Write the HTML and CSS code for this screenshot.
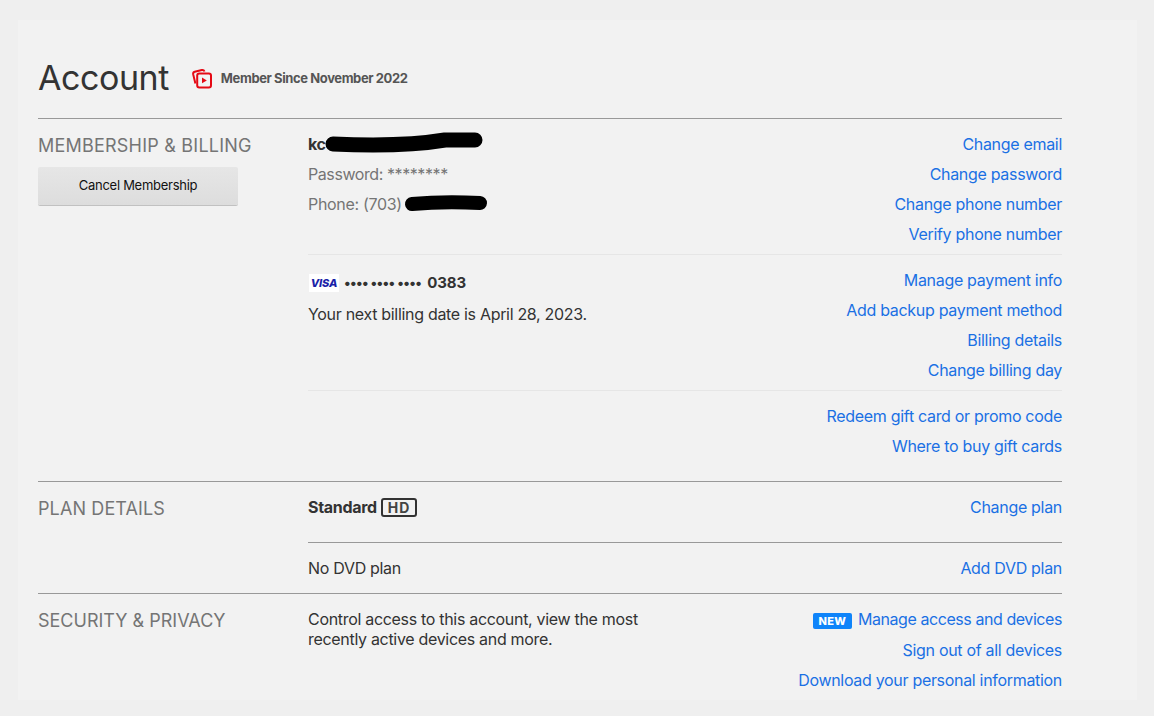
FILE: index.html
```html
<!DOCTYPE html>
<html lang="en">
<head>
<meta charset="utf-8">
<title>Account</title>
<link rel="stylesheet" href="styles.css">
</head>
<body>
<main class="panel">
  <header class="head">
    <h1 class="title">Account</h1>
    <div class="since">
      <svg class="since-icon" viewBox="0 0 24 24" width="24" height="24" fill="none" stroke="#e50914" stroke-width="2">
        <path d="M5.4 17.6 3.2 8.4Q2.8 6.300 4.700 5.800L11.800 4Q13.800 3.600 14.500 5.500"/>
        <rect x="7.200" y="7.400" width="13.800" height="14" rx="2.200"/>
        <path d="M12 11.500 16.800 14.400 12 17.300Z" fill="#e50914" stroke="none"/>
      </svg>
      <span>Member Since November 2022</span>
    </div>
  </header>

  <section class="section section-billing">
    <div class="side">
      <h2 class="side-title">MEMBERSHIP &amp; BILLING</h2>
      <button class="cancel" type="button">Cancel Membership</button>
    </div>
    <div class="body">
      <div class="block block-line">
        <div class="info">
          <div class="line strong redact-row">kc<svg class="scribble scribble-email" viewBox="0 0 160 22" width="160" height="22"><path d="M8 13 C50 15 90 14 120 9 L150 9" stroke="#000" stroke-width="15" stroke-linecap="round" fill="none"/></svg></div>
          <div class="line muted password">Password: ********</div>
          <div class="line muted redact-row">Phone: (703)<svg class="scribble scribble-phone" viewBox="0 0 84 18" width="84" height="18"><path d="M8 10 C30 8 55 8 76 9" stroke="#000" stroke-width="14" stroke-linecap="round" fill="none"/></svg></div>
        </div>
        <nav class="links">
          <a href="#">Change email</a>
          <a href="#">Change password</a>
          <a href="#">Change phone number</a>
          <a href="#">Verify phone number</a>
        </nav>
      </div>
      <div class="block block-line">
        <div class="info">
          <div class="line strong card">
            <span class="visa">VISA</span>
            <span class="dots">•••• •••• ••••</span>
            <span>0383</span>
          </div>
          <div class="line dark billing-date">Your next billing date is April 28, 2023.</div>
        </div>
        <nav class="links">
          <a href="#">Manage payment info</a>
          <a href="#">Add backup payment method</a>
          <a href="#">Billing details</a>
          <a href="#">Change billing day</a>
        </nav>
      </div>
      <div class="block">
        <div class="info"></div>
        <nav class="links">
          <a href="#">Redeem gift card or promo code</a>
          <a href="#">Where to buy gift cards</a>
        </nav>
      </div>
    </div>
  </section>

  <section class="section section-plan">
    <div class="side">
      <h2 class="side-title">PLAN DETAILS</h2>
    </div>
    <div class="body">
      <div class="block block-plan">
        <div class="info">
          <div class="line strong plan">Standard <span class="hd">HD</span></div>
        </div>
        <nav class="links"><a href="#">Change plan</a></nav>
      </div>
      <div class="block">
        <div class="info"><div class="line dark">No DVD plan</div></div>
        <nav class="links"><a href="#">Add DVD plan</a></nav>
      </div>
    </div>
  </section>

  <section class="section section-security">
    <div class="side">
      <h2 class="side-title">SECURITY &amp; PRIVACY</h2>
    </div>
    <div class="body">
      <div class="block">
        <div class="info"><p class="desc">Control access to this account, view the most recently active devices and more.</p></div>
        <nav class="links">
          <a class="link-new" href="#"><span class="new">NEW</span>Manage access and devices</a>
          <a href="#">Sign out of all devices</a>
          <a href="#">Download your personal information</a>
        </nav>
      </div>
    </div>
  </section>
</main>
</body>
</html>
```
FILE: styles.css
```css
* { box-sizing: border-box; }
html, body { margin: 0; height: 716px; overflow: hidden; }
body {
  background: #efefef;
  color: #333;
  font-family: Inter, "Liberation Sans", sans-serif;
  font-size: 16px;
  letter-spacing: -.31px;
}
.panel {
  width: 1119px;
  height: 680px;
  margin: 20px 0 0 18px;
  padding: 0 75px 0 20px;
  background: #f2f2f2;
}
.head {
  display: flex;
  align-items: center;
  height: 98px;
  padding-top: 18px;
}
.title {
  margin: 0;
  font-size: 34px;
  font-weight: 400;
  line-height: 40px;
  letter-spacing: -.45px;
  color: #333;
}
.since {
  display: flex;
  align-items: center;
  gap: 7px;
  margin-left: 21px;
  font-size: 13px;
  font-weight: 700;
  letter-spacing: -.4px;
  color: #555;
}
.section {
  display: flex;
  border-top: 1px solid #999;
}
.section-billing { height: 363px; padding-top: 10px; }
.section-plan { height: 112px; padding-top: 10px; }
.section-security { padding-top: 10px; }
.side { width: 270px; flex: none; }
.side-title {
  margin: 0;
  padding-top: 1px;
  font-size: 18px;
  font-weight: 400;
  line-height: 32px;
  letter-spacing: .12px;
  color: #757575;
}
.section-billing .side-title { letter-spacing: .22px; }
.section-security .side-title { letter-spacing: 0; }
.cancel {
  display: block;
  width: 200px;
  height: 38px;
  margin-top: 5px;
  padding-bottom: 4px;
  border: 0;
  border-radius: 2px;
  background: linear-gradient(#e6e6e6, #dddddd);
  box-shadow: 0 1px 0 rgba(0, 0, 0, .2);
  font: 13px Inter, "Liberation Sans", sans-serif;
  letter-spacing: -.27px;
  color: #111;
}
.body { flex: 1; }
.block { display: flex; justify-content: space-between; }
.block-line { border-bottom: 1px solid #e6e6e6; padding-bottom: 5px; margin-bottom: 10px; }
.block-plan { border-bottom: 1px solid #999; padding-bottom: 20px; margin-bottom: 10px; }
.info { width: 340px; }
.line { height: 30px; line-height: 30px; white-space: nowrap; }
.strong { font-weight: 700; color: #333; }
.muted { color: #757575; }
.password { letter-spacing: -.42px; }
.dark { color: #333; }
.redact-row { display: flex; align-items: center; }
.scribble-email { margin: -4px 0 0 -1px; }
.scribble-phone { margin: -2px 0 0 2px; }
.card { display: flex; align-items: center; gap: 6px; font-size: 15px; padding-top: 5px; letter-spacing: -.1px; }
.visa {
  width: 30px;
  height: 18px;
  background: #fff;
  color: #1a1fa8;
  font-size: 11px;
  font-weight: 800;
  font-style: italic;
  line-height: 18px;
  text-align: center;
  margin-left: 1px;
}
.dots { font-size: 14px; font-weight: 700; letter-spacing: -.65px; margin-left: -1px; }
.billing-date { margin-top: 4px; }
.plan { display: flex; align-items: center; gap: 4px; }
.hd {
  height: 19px;
  padding: 0 5px;
  border: 2px solid #333;
  border-radius: 3px;
  font-size: 14px;
  line-height: 15px;
  font-weight: 700;
  letter-spacing: .9px;
  color: #444;
}
.desc { margin: 5px 0 0; line-height: 20px; color: #333; }
.links { display: flex; flex-direction: column; align-items: flex-end; }
.links a { height: 30px; line-height: 30px; color: #1a70e4; text-decoration: none; white-space: nowrap; }
.links .link-new { height: 31px; letter-spacing: -.43px; }
.new {
  display: inline-block;
  height: 16px;
  margin-right: 6px;
  padding: 0 5.500px;
  border-radius: 2px;
  background: #0f84fa;
  color: #fff;
  font-size: 11px;
  font-weight: 800;
  line-height: 16px;
  letter-spacing: .4px;
  vertical-align: 0;
}
```
